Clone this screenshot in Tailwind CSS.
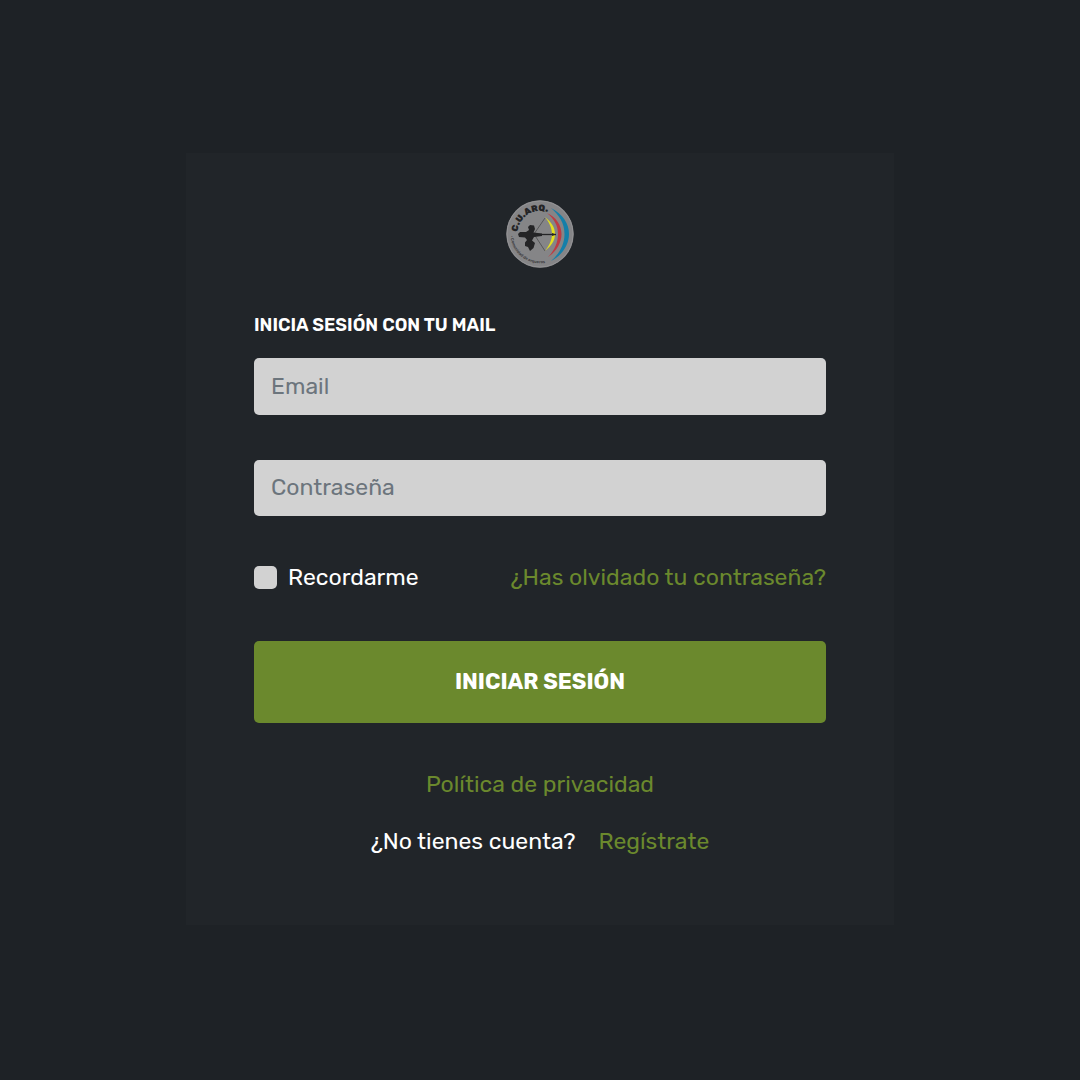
<!DOCTYPE html>
<html lang="es">
<head>
<meta charset="utf-8">
<meta name="viewport" content="width=device-width, initial-scale=1">
<title>Iniciar sesión</title>
<script src="https://cdn.jsdelivr.net/npm/@tailwindcss/browser@4"></script>
</head>
<body class="flex min-h-screen items-center justify-center bg-[#1e2226] pb-0.5 font-[Rubik,Roboto,sans-serif] text-[23px] leading-8 text-white">
<main class="w-full max-w-[708px] bg-[#212529] px-[68px] pt-[47px] pb-[68px]">
  <svg class="mx-auto mb-[45px] size-[68px]" viewBox="0 0 68 68" role="img" aria-label="C.U. ARQ.">
    <circle cx="34" cy="34" r="33.7" fill="#858587"/>
    <circle cx="34" cy="34" r="33" fill="none" stroke="#939395" stroke-width="1"/>
    <g fill="none">
      <path d="M45 8C57 14 63 24 63 34S57 55 45 61C53 54 58.500 45 58.500 34S53 15 45 8Z" fill="#147fa9"/>
      <path d="M41 13C50 17 55.500 25 55.500 34S50 52 42 57C48 51 52 43 52 34S48 19 41 13Z" fill="#bd3b42"/>
      <path d="M39 17C45 22 49 27 49 34S45 46 39 51C43 46 46 40 46 34S43 22 39 17Z" fill="#e3df20"/>
      <path d="M39 18 28 34 39 51" stroke="#4b4b4c" stroke-width=".8"/>
      <path d="M26 34.500H50" stroke="#242426" stroke-width="1.300"/>
      <path d="M46 33 50 34.500 46 36Z" fill="#242426"/>
    </g>
    <path d="M22 27 24 25 28 25.500 29 29 27.500 32.500 36 33.500 36 36 28 37 26 40.500 29 43 27.500 48 24 51 22 47 19 46 19 42.500 21 40 19 37.500 13 37 12 34 14 32 20 32 23 30Z" fill="#242426"/>
    <path id="name-arc" d="M11.500 32A23 23 0 0 1 50 17" fill="none"/>
    <path id="motto-arc" d="M4.500 36A30 30 0 0 0 46 61" fill="none"/>
    <text class="fill-[#242426] text-[9px] font-black"><textPath href="#name-arc">C.U.ARQ.</textPath></text>
    <text class="fill-[#3c3c3e] text-[4px] font-semibold"><textPath href="#motto-arc">• Comunidad de arqueros</textPath></text>
  </svg>
  <h1 class="mb-[21px] text-lg leading-6 font-semibold">INICIA SESIÓN CON TU MAIL</h1>
  <form>
    <input type="email" aria-label="Email" placeholder="Email" class="mb-[45px] h-[57px] w-full rounded-[5px] bg-[#d2d2d2] px-[17px] pb-0.5 text-[#212529] placeholder:text-[#6c757d]">
    <input type="password" aria-label="Contraseña" placeholder="Contraseña" class="mb-[45px] h-14 w-full rounded-[5px] bg-[#d2d2d2] px-[17px] pb-0.5 text-[#212529] placeholder:text-[#6c757d]">
    <div class="mb-12 flex items-center justify-between">
      <label class="flex items-center gap-[11px]"><input type="checkbox" class="size-[23px] appearance-none rounded-[5px] bg-[#d2d2d2] checked:bg-[#6b892d]">Recordarme</label>
      <a href="#" class="text-[#6b892d]">¿Has olvidado tu contraseña?</a>
    </div>
    <button type="submit" class="h-[82px] w-full rounded-[5px] bg-[#6b892d] text-[22px] font-bold">INICIAR SESIÓN</button>
  </form>
  <div class="mt-[45px] flex flex-col items-center gap-[25px]">
    <a href="#" class="text-[#6b892d]">Política de privacidad</a>
    <p class="flex gap-[23px]"><span>¿No tienes cuenta?</span><a href="#" class="text-[#6b892d]">Regístrate</a></p>
  </div>
</main>
</body>
</html>
